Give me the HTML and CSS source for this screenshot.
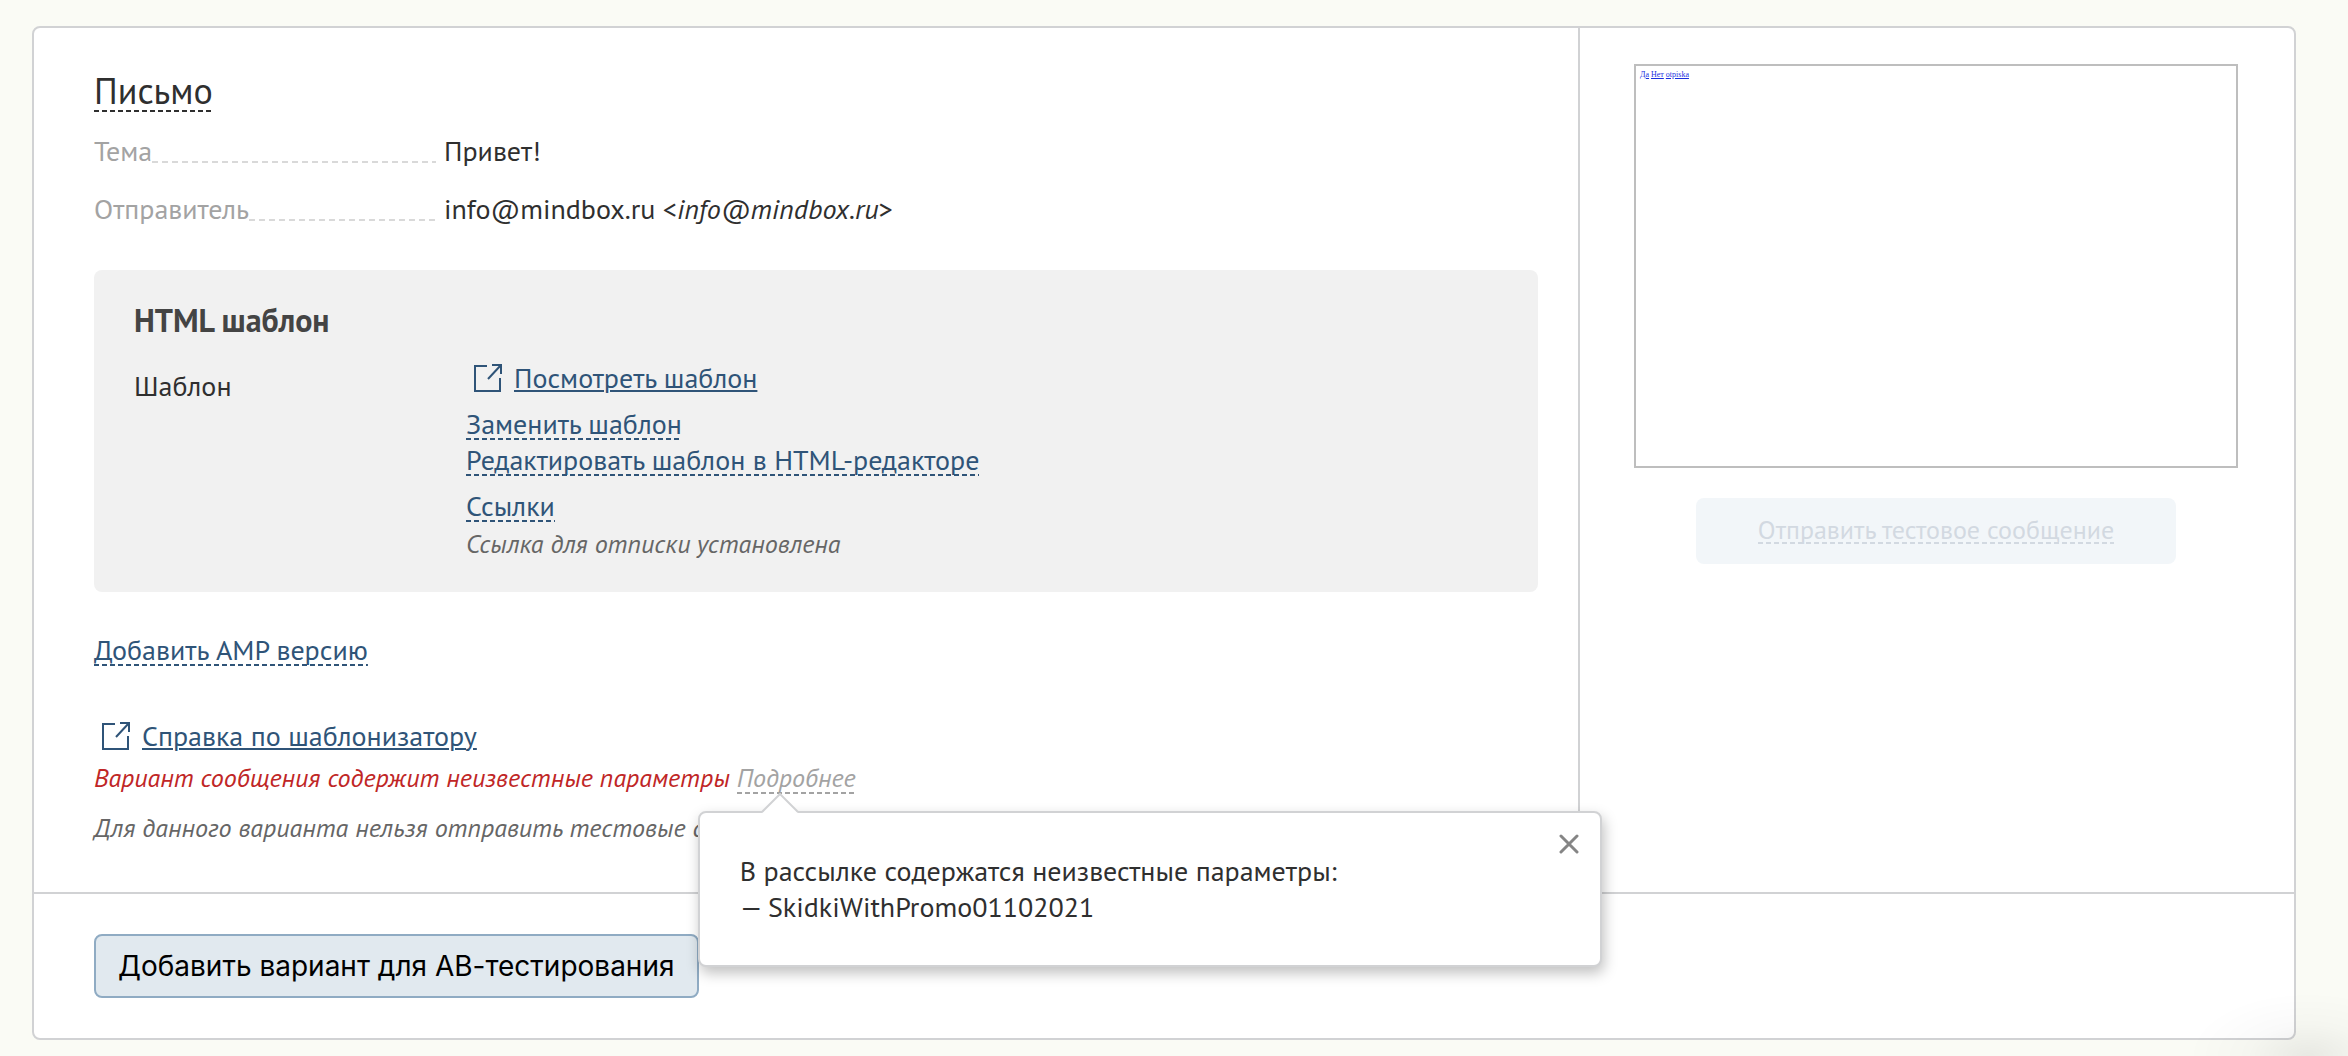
FILE: index.html
```html
<!DOCTYPE html>
<html lang="ru">
<head>
<meta charset="utf-8">
<title>Письмо</title>
<meta name="viewport" content="width=device-width, initial-scale=1">
<link rel="stylesheet" href="styles.css">
</head>
<body>
<main class="card">
  <section class="letter">
    <h1 class="title"><button class="dashed title-toggle" type="button">Письмо</button></h1>
    <dl class="fields">
      <div class="field">
        <dt class="field-name">Тема</dt>
        <dd class="field-value">Привет!</dd>
      </div>
      <div class="field">
        <dt class="field-name">Отправитель</dt>
        <dd class="field-value">info@mindbox.ru &lt;<em>info@mindbox.ru</em>&gt;</dd>
      </div>
    </dl>

    <section class="template">
      <h2 class="template-title">HTML шаблон</h2>
      <div class="template-row">
        <span class="template-label">Шаблон</span>
        <div class="template-actions">
          <div class="icon-link">
            <svg class="icon" viewBox="0 0 28 28" aria-hidden="true"><path d="M13 2H1v25h25V14M14 15L27 1M18 1h9v9"/></svg>
            <a class="link" href="#">Посмотреть шаблон</a>
          </div>
          <div class="action-group">
            <div class="line"><a class="dashed" href="#">Заменить шаблон</a></div>
            <div class="line"><a class="dashed" href="#">Редактировать шаблон в HTML-редакторе</a></div>
          </div>
          <div class="action-group">
            <div class="line"><a class="dashed" href="#">Ссылки</a></div>
            <p class="note">Ссылка для отписки установлена</p>
          </div>
        </div>
      </div>
    </section>

    <div class="line"><a class="dashed" href="#">Добавить AMP версию</a></div>

    <div class="help">
      <div class="icon-link">
        <svg class="icon" viewBox="0 0 28 28" aria-hidden="true"><path d="M13 2H1v25h25V14M14 15L27 1M18 1h9v9"/></svg>
        <a class="link" href="#">Справка по шаблонизатору</a>
      </div>
      <p class="note warning">Вариант сообщения содержит неизвестные параметры
        <span class="details"><a class="dashed details-link" href="#">Подробнее</a><span class="popup" role="dialog" aria-label="Неизвестные параметры">
            <svg class="popup-arrow" viewBox="0 0 38 20" aria-hidden="true"><path class="popup-arrow-fill" d="M1 20L19 1L37 20Z"/><path class="popup-arrow-edge" d="M1 19L19 1L37 19"/></svg>
            <button class="popup-close" type="button" aria-label="Закрыть"><svg class="popup-close-icon" viewBox="0 0 20 20" aria-hidden="true"><path d="M2 2l16 16M18 2L2 18"/></svg></button>
            <span class="popup-text">В рассылке содержатся неизвестные параметры:<br>— SkidkiWithPromo01102021</span>
          </span></span>
      </p>
      <p class="note">Для данного варианта нельзя отправить тестовые сообщения</p>
    </div>
  </section>

  <aside class="preview">
    <div class="preview-frame">
      <a href="#">Да</a> <a href="#">Нет</a> <a href="#">otpiska</a>
    </div>
    <button class="send-test" type="button" disabled><span class="dashed">Отправить тестовое сообщение</span></button>
  </aside>

  <footer class="footer">
    <button class="add-variant" type="button">Добавить вариант для АВ-тестирования</button>
  </footer>
</main>
</body>
</html>
```
FILE: styles.css
```css
* {
  box-sizing: border-box;
}

body {
  margin: 0;
  padding: 26px 52px 16px 32px;
  background: #fafbf5;
  color: #2f2f2f;
  font: 28px/36px "PT Sans", "Noto Sans", sans-serif;
}

/* Soft shade in the lower right corner of the window */
body::after {
  position: fixed;
  right: 0;
  bottom: 0;
  width: 160px;
  height: 64px;
  background: radial-gradient(ellipse 120px 64px at 120px 100%, rgba(0, 0, 0, 0.07), rgba(0, 0, 0, 0.02) 50%, transparent);
  pointer-events: none;
  content: "";
}

h1, h2, p, dl, dd {
  margin: 0;
}

button {
  margin: 0;
  padding: 0;
  border: 0;
  background: none;
  color: inherit;
  font: inherit;
}

a {
  color: #2f5478;
}

.card {
  display: grid;
  grid-template-columns: minmax(0, 1fr) 716px;
  border: 2px solid #d1d2d4;
  border-radius: 8px;
  background: #fff;
}

.letter {
  padding: 43px 40px 46px 60px;
}

.line {
  height: 36px;
}

.dashed {
  display: inline-block;
  padding-bottom: 2px;
  background: repeating-linear-gradient(90deg, currentColor 0 5px, transparent 5px 8px) bottom / 100% 2px no-repeat;
  line-height: 28px;
  text-decoration: none;
}

.title {
  height: 44px;
  font-size: 36px;
  font-weight: 400;
  line-height: 40px;
}

.title-toggle {
  line-height: 38px;
}

.field {
  display: flex;
  height: 36px;
  margin-top: 18px;
}

.field + .field {
  margin-top: 22px;
}

.field-name {
  display: flex;
  width: 342px;
  margin-right: 8px;
  color: #a3a3a3;
}

.field-name::after {
  flex: 1;
  height: 2px;
  margin-top: 28px;
  background: repeating-linear-gradient(90deg, #d9d9d9 0 6px, transparent 6px 10px);
  content: "";
}

.template {
  margin: 43px 0 40px;
  padding: 32px 40px 30px;
  border-radius: 8px;
  background: #f1f1f1;
}

.template-title {
  color: #444;
  font-size: 32px;
  font-weight: 700;
  line-height: 36px;
}

.template-row {
  display: flex;
  margin-top: 22px;
}

.template-label {
  width: 332px;
  padding-top: 8px;
}

.icon-link {
  display: flex;
  gap: 12px;
  padding-left: 8px;
}

.icon {
  width: 28px;
  height: 28px;
  margin-top: 4px;
  fill: none;
  stroke: #2f5478;
  stroke-width: 2;
}

.link {
  text-decoration-thickness: 2px;
  text-underline-offset: 2px;
}

.action-group {
  margin-top: 10px;
}

.note {
  margin-top: 2px;
  color: #666;
  font-size: 26px;
  font-style: italic;
}

.help {
  margin-top: 50px;
}

.help .note {
  margin-top: 6px;
}

.help .note + .note {
  margin-top: 14px;
}

.help .warning {
  color: #c02626;
}

.details {
  position: relative;
}

.details-link {
  color: #a3a3a3;
}

.popup {
  position: absolute;
  top: 50px;
  left: -39px;
  z-index: 1;
  width: 904px;
  padding: 40px;
  border: 2px solid #d1d2d4;
  border-radius: 8px;
  background: #fff;
  box-shadow: 2px 6px 14px rgba(0, 0, 0, 0.25);
  color: #2f2f2f;
  font-size: 28px;
  font-style: normal;
}

.popup-arrow {
  position: absolute;
  top: -20px;
  left: 61px;
  width: 38px;
  height: 20px;
}

.popup-arrow-fill {
  fill: #fff;
}

.popup-arrow-edge {
  fill: none;
  stroke: #d1d2d4;
  stroke-width: 2;
}

.popup-close {
  position: absolute;
  top: 21px;
  right: 21px;
  display: flex;
}

.popup-close-icon {
  width: 20px;
  height: 20px;
  fill: none;
  stroke: #858585;
  stroke-linecap: round;
  stroke-width: 3;
}

.popup-text {
  display: block;
  height: 72px;
}

.preview {
  display: flex;
  flex-direction: column;
  align-items: center;
  gap: 30px;
  padding: 36px 56px 36px 54px;
  border-left: 2px solid #d1d2d4;
}

.preview-frame {
  width: 100%;
  height: 404px;
  padding: 4px;
  border: 2px solid #bebebe;
  font: 8px/10px "Liberation Serif", serif;
}

.preview-frame a {
  color: #1a2fe0;
}

.send-test {
  display: flex;
  justify-content: center;
  width: 480px;
  padding: 20px 0;
  border-radius: 8px;
  background: #f2f6f9;
  color: #d2d9e1;
  font-size: 26px;
}

.send-test .dashed {
  line-height: 24px;
}

.footer {
  grid-column: 1 / -1;
  padding: 40px 60px;
  border-top: 2px solid #d1d2d4;
}

.add-variant {
  display: block;
  padding: 12px 22px;
  border: 2px solid #8fabc3;
  border-radius: 8px;
  background: #e1e9ef;
  color: #000;
  font: 28px/36px Inter, sans-serif;
}
```
